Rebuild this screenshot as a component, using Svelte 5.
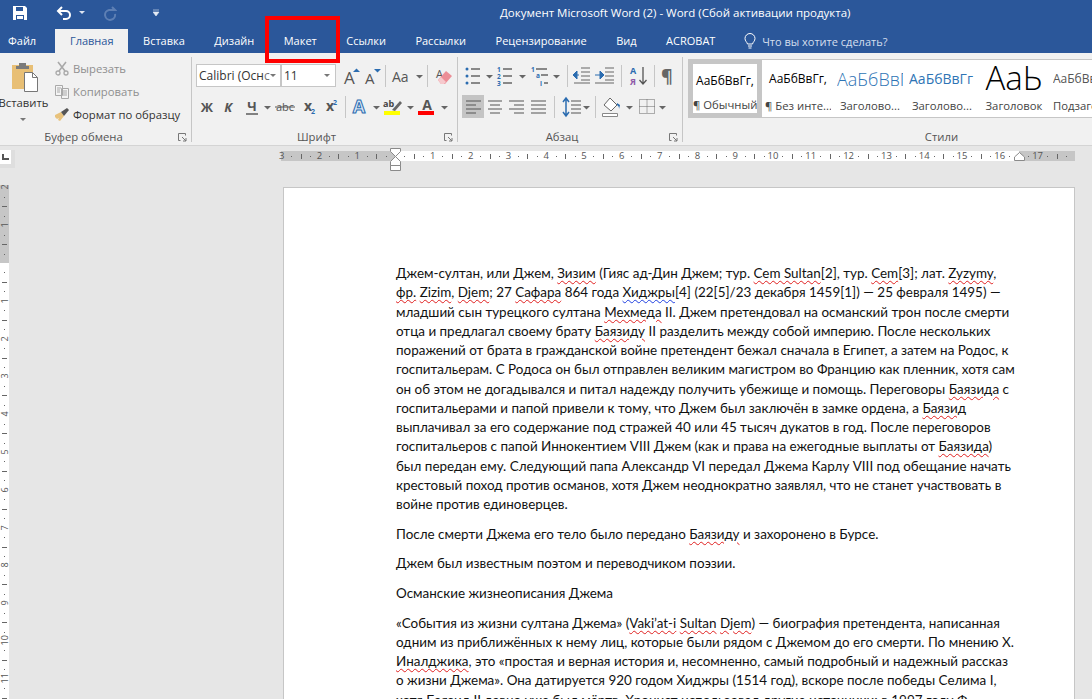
<script>
  const tabs = ["Вставка", "Дизайн", "Макет", "Ссылки", "Рассылки", "Рецензирование", "Вид", "ACROBAT"];

  const styleItems = [
    { sample: "АаБбВвГг,", name: "¶ Обычный", cls: "normal", on: true },
    { sample: "АаБбВвГг,", name: "¶ Без инте...", cls: "normal" },
    { sample: "АаБбВвГг", name: "Заголово...", cls: "h1" },
    { sample: "АаБбВвГг", name: "Заголово...", cls: "h2" },
    { sample: "АаЬ", name: "Заголовок", cls: "title" },
    { sample: "АаБбВвГг", name: "Подзаголовок", cls: "sub" }
  ];

  // ruler scale: 37.8px per cm
  const cm = 37.8;
  const hNumbers = [];
  const hTicks = [];
  for (let i = -3; i <= 17; i++) {
    if (i !== 0) hNumbers.push({ x: 114 + i * cm, n: Math.abs(i) });
  }
  for (let i = -3; i < 18; i++) {
    hTicks.push({ x: 114 + (i + 0.25) * cm, big: false });
    hTicks.push({ x: 114 + (i + 0.5) * cm, big: true });
    hTicks.push({ x: 114 + (i + 0.75) * cm, big: false });
  }
  const vNumbers = [];
  const vTicks = [];
  for (let i = -2; i <= 12; i++) {
    if (i !== 0) vNumbers.push({ y: 78 + i * cm, n: Math.abs(i) });
    vTicks.push({ y: 78 + (i + 0.25) * cm, big: false });
    vTicks.push({ y: 78 + (i + 0.5) * cm, big: true });
    vTicks.push({ y: 78 + (i + 0.75) * cm, big: false });
  }
</script>

{#snippet caret(w = 10)}
  <svg width={w} height="22"><path d="M{w / 2 - 3} 10h7l-3.500 3.500z" fill="#666" /></svg>
{/snippet}

{#snippet launcher()}
  <svg class="launcher" width="9" height="9"><path d="M.5 .5h7v2M.5 .5v7h2M4 4l4 4M8 5v3H5" fill="none" stroke="#777" /></svg>
{/snippet}

{#snippet sep(w = 6)}
  <span class="sep" style:width="{w}px"><i></i></span>
{/snippet}

<div class="word">
  <header class="titlebar">
    <div class="qat">
      <svg width="16" height="16" viewBox="0 0 16 16"><path d="M1 1h12l2 2v12H1z" fill="#fff" /><path d="M4 2h7v4H4zM4 10h8v5H4z" fill="#2b579a" /><path d="M5 11h6v3H5z" fill="#fff" /></svg>
      <svg class="undo" width="16" height="16" viewBox="0 0 16 16"><path d="M6 2L2 6l4 4M2.500 6H10a4 4 0 0 1 0 8H7" fill="none" stroke="#fff" stroke-width="2" /></svg>
      <svg class="mini" width="7" height="5"><path d="M0 1h6L3 4z" fill="#dfe6f1" /></svg>
      <svg class="redo" width="14" height="16" viewBox="0 0 14 16"><path d="M9 2l3 3H6a5 5 0 1 0 6 4" fill="none" stroke="#5d7fb4" stroke-width="2" /></svg>
      <svg class="custom" width="7" height="8"><path d="M0 1h6M0 3h6L3 7z" fill="#e6ecf5" stroke="#e6ecf5" stroke-width=".6" /></svg>
    </div>
    <div class="doc-title">Документ Microsoft Word (2) - Word (Сбой активации продукта)</div>
  </header>

  <nav class="tabs">
    <span class="tab file">Файл</span>
    <span class="tab active">Главная</span>
    {#each tabs as t}
      <span class="tab">{t}</span>
    {/each}
    <span class="tell">
      <svg width="12" height="16" viewBox="0 0 12 16"><path d="M3.500 11C3 9 1 8 1 5.500a5 5 0 0 1 10 0C11 8 9 9 8.500 11zM4 13h4M4.500 15h3" fill="none" stroke="#fff" /></svg>
      Что вы хотите сделать?
    </span>
  </nav>

  <section class="ribbon">
    <div class="group clip">
      <div class="clip-body">
        <button class="paste">
          <svg width="28" height="31" viewBox="0 0 28 31">
            <path d="M1 3h21v24H1z" fill="#e8bf75" />
            <path d="M8 1h7v3h3v3H5V4h3z" fill="#7b7b7b" />
            <path d="M13.500 10.500h8l5 5v14h-13z" fill="#fff" stroke="#777" />
            <path d="M21.500 10.500v5h5" fill="none" stroke="#777" />
          </svg>
          <span>Вставить</span>
          <svg width="7" height="5"><path d="M0 1h6L3 4z" fill="#777" /></svg>
        </button>
        <div class="clip-list">
          <span class="dim">
            <svg width="14" height="15" viewBox="0 0 14 15"><path d="M3 1l7 9M11 1l-7 9" stroke="#a9a9a9" stroke-width="1.600" /><circle cx="3" cy="12" r="2" fill="none" stroke="#a9a9a9" stroke-width="1.300" /><circle cx="11" cy="12" r="2" fill="none" stroke="#a9a9a9" stroke-width="1.300" /></svg>
            Вырезать
          </span>
          <span class="dim">
            <svg width="14" height="15" viewBox="0 0 14 15"><path d="M.5 1.500h7v10h-7zM6.500 4.500h7v10h-7zM2 4h4M2 6h3M2 8h3M8 7h4M8 9h4M8 11h4" fill="#f4f4f4" stroke="#a9a9a9" /></svg>
            Копировать
          </span>
          <span>
            <svg width="16" height="15" viewBox="0 0 16 15"><path d="M1 8l6-3 3 4-4 5-2-1 1-2-2 1-2-2z" fill="#e8c27c" /><path d="M7 5l6-4 2 2-5 6z" fill="#555" /></svg>
            Формат по образцу
          </span>
        </div>
      </div>
      <div class="label">Буфер обмена</div>
      {@render launcher()}
    </div>

    <div class="group font">
      <div class="row one">
        <span class="combo name"><b>Calibri (Осн<span class="clip-c">с</span></b><svg width="7" height="5"><path d="M0 1h6L3 4z" fill="#777" /></svg></span>
        <span class="combo size"><b>11</b><svg width="7" height="5"><path d="M0 1h6L3 4z" fill="#777" /></svg></span>
        <svg width="23" height="22"><text x="6" y="19" class="ic-a big">A</text><path d="M17 5h7l-3.500-3.500z" transform="translate(-2 2)" fill="#2b6cb0" /></svg>
        <svg width="21" height="22"><text x="4" y="19" class="ic-a">A</text><path d="M13 4h7l-3.500 3.500z" fill="#2b6cb0" /></svg>
        {@render sep(6)}
        <svg width="26" height="22"><text x="4" y="17" class="ic-a aa">Aa</text></svg>
        {@render caret(10)}
        {@render sep(6)}
        <svg width="26" height="22" viewBox="0 0 26 22"><text x="6" y="13" class="ic-a small">A</text><path d="M8 15l8-9 6 5-7 8h-4z" fill="#ec8e97" /><path d="M8 15l3-3 5 5-2 2h-3z" fill="#f6c9cd" /></svg>
      </div>
      <div class="row two">
        <svg width="20" height="22"><text x="9" y="16" class="bold">Ж</text></svg>
        <svg width="20" height="22"><text x="10" y="16" class="bold it">К</text></svg>
        <svg width="24" height="22"><text x="14" y="15" class="bold">Ч</text><path d="M8 18h12" stroke="#444" stroke-width="1.300" /></svg>
        {@render caret(10)}
        <svg width="26" height="22"><text x="13" y="15" class="strike">abc</text><path d="M3 11h20" stroke="#555" /></svg>
        <svg width="22" height="22"><text x="6" y="15" class="bold sc">x</text><text x="13" y="18" class="subs">2</text></svg>
        <svg width="22" height="22"><text x="6" y="15" class="bold sc">x</text><text x="13" y="9" class="subs">2</text></svg>
        {@render sep(6)}
        <svg width="22" height="22"><text x="11" y="17" class="fx">A</text></svg>
        {@render caret(12)}
        <svg width="22" height="22"><text x="1" y="11" class="hl">ab</text><path d="M10 14l8-9 2 2-7 8z" fill="#666" /><path d="M2 15h16v4H2z" fill="#ff0" /></svg>
        {@render caret(12)}
        <svg width="22" height="22"><text x="11" y="14" class="ra">A</text><path d="M1 15h16v4H1z" fill="#f00" transform="translate(1 0)" /></svg>
        {@render caret(12)}
      </div>
      <div class="label">Шрифт</div>
      {@render launcher()}
    </div>

    <div class="group para">
      <div class="row one">
        <svg width="20" height="22" viewBox="0 0 20 22"><g fill="#2b6cb0"><circle cx="5" cy="4" r="1.500" /><circle cx="5" cy="11" r="1.500" /><circle cx="5" cy="18" r="1.500" /></g><path d="M9 4h9M9 11h9M9 18h9" stroke="#666" stroke-width="1.300" /></svg>
        {@render caret(14)}
        <svg width="19" height="22" viewBox="0 0 19 22"><g class="nm"><text x="1" y="7">1</text><text x="1" y="14">2</text><text x="1" y="21">3</text></g><path d="M7 4h9M7 11h9M7 18h9" stroke="#666" stroke-width="1.300" /></svg>
        {@render caret(14)}
        <svg width="21" height="22" viewBox="0 0 21 22"><g class="nm"><text x="2" y="7">1</text><text x="7" y="13">a</text><text x="11" y="21">i</text></g><path d="M7 4h11M12 10h7M15 18h4" stroke="#666" stroke-width="1.300" /></svg>
        {@render caret(12)}
        {@render sep(10)}
        <svg width="21" height="22" viewBox="0 0 21 22"><path d="M1 10h6M5 6l-4 4 4 4z" fill="#2b6cb0" stroke="#2b6cb0" /><path d="M9 4h9M9 8h9M9 12h9M9 16h9M2 19h16" stroke="#666" stroke-width="1.100" transform="translate(0 -1)" /></svg>
        <svg width="23" height="22" viewBox="0 0 23 22"><path d="M2 10h6M7 6l4 4-4 4z" fill="#2b6cb0" stroke="#2b6cb0" /><path d="M12 4h9M12 8h9M12 12h9M12 16h9M2 19h19" stroke="#666" stroke-width="1.100" transform="translate(0 -1)" /></svg>
        {@render sep(10)}
        <svg width="22" height="22" viewBox="0 0 22 22"><text x="4" y="9" class="az">A</text><text x="4" y="20" class="az vi">Я</text><path d="M17 2v17M13.500 15l3.500 4 3.500-4" fill="none" stroke="#555" stroke-width="1.300" /></svg>
        {@render sep(12)}
        <svg width="22" height="22"><text x="7" y="18" class="pil">¶</text></svg>
      </div>
      <div class="row two">
        <svg class="selected" width="22" height="23" viewBox="0 0 22 23"><path d="M4 6h15M4 10h10M4 14h15M4 18h10" stroke="#555" stroke-width="1.100" /></svg>
        <svg width="22" height="23" viewBox="0 0 22 23"><path d="M4 6h14M6 10h10M4 14h14M6 18h10" stroke="#555" stroke-width="1.100" /></svg>
        <svg width="22" height="23" viewBox="0 0 22 23"><path d="M3 6h15M8 10h10M3 14h15M8 18h10" stroke="#555" stroke-width="1.100" /></svg>
        <svg width="22" height="23" viewBox="0 0 22 23"><path d="M3 6h15M3 10h15M3 14h15M3 18h15" stroke="#555" stroke-width="1.100" /></svg>
        {@render sep(8)}
        <svg width="24" height="22" viewBox="0 0 24 22"><path d="M8 3v16M5 6l3-4 3 4M5 16l3 4 3-4" fill="none" stroke="#2b6cb0" stroke-width="1.500" /><path d="M13 5h10M13 9h10M13 13h10M13 17h10" stroke="#555" stroke-width="1.100" /></svg>
        {@render caret(8)}
        {@render sep(10)}
        <svg width="24" height="22" viewBox="0 0 24 22"><path d="M10 2l7 7-6 6-7-6z" fill="#fff" stroke="#666" /><path d="M17 9c2 1 2 3 2 4l1-4-3-2z" fill="#2b6cb0" /><path d="M2.500 17.500h15v3h-15z" fill="#fff" stroke="#888" /></svg>
        {@render caret(10)}
        <svg width="24" height="22" viewBox="0 0 24 22"><path d="M5.500 3.500h15v14h-15zM13 3.500v14M5.500 10.500h15" fill="none" stroke="#666" stroke-dasharray="1 1" /></svg>
        {@render caret(8)}
      </div>
      <div class="label">Абзац</div>
      {@render launcher()}
    </div>

    <div class="group styles">
      <div class="gallery">
        {#each styleItems as s}
          <div class="style" class:on={s.on}>
            <div class="sample {s.cls}">{s.sample}</div>
            <div class="sname">{s.name}</div>
          </div>
        {/each}
      </div>
      <div class="label">Стили</div>
    </div>
  </section>

  <main class="workspace">
    <div class="corner"><svg width="8" height="7"><path d="M1 0v5h6" fill="none" stroke="#555" stroke-width="2" /></svg></div>

    <div class="vruler">
      <div class="vgray"></div>
      {#each vTicks as t}
        <i class="vtick" class:big={t.big} style:top="{t.y}px"></i>
      {/each}
      {#each vNumbers as t}
        <span class="vnum" style:top="{t.y}px">{t.n}</span>
      {/each}
    </div>

    <div class="main">
      <div class="hruler">
        <div class="hgray left"></div>
        <div class="hgray right"></div>
        {#each hTicks as t}
          <i class="htick" class:big={t.big} style:left="{t.x}px"></i>
        {/each}
        {#each hNumbers as t}
          <span class="hnum" style:left="{t.x}px">{t.n}</span>
        {/each}
        <svg class="marker first" width="11" height="24" viewBox="0 0 11 24"><path d="M.5 .5h10v3l-5 5-5-5zM.5 13.500l5-5 5 5v4H.5zM.5 17.500h10v5H.5z" fill="#fff" stroke="#8a8a8a" /></svg>
        <svg class="marker last" width="11" height="9" viewBox="0 0 11 9"><path d="M.5 5l5-4.500 5 4.500v3.500H.5z" fill="#fff" stroke="#8a8a8a" /></svg>
      </div>

      <article class="page">
        <p>
          <span>Джем-султан, или Джем, <u>Зизим</u> (Гияс ад-Дин Джем; тур. <u>Cem Sultan</u>[2], тур. <u>Cem</u>[3]; лат. <u>Zyzymy</u>,</span>
          <span><u>фр.</u> <u>Zizim</u>, <u>Djem</u>; 27 <u>Сафара</u> 864 года <u class="bl">Хиджры</u>[4] (22[5]/23 декабря 1459[1]) — 25 февраля 1495) —</span>
          <span>младший сын турецкого султана <u>Мехмеда</u> II. Джем претендовал на османский трон после смерти</span>
          <span>отца и предлагал своему брату <u>Баязиду</u> II разделить между собой империю. После нескольких</span>
          <span>поражений от брата в гражданской войне претендент бежал сначала в Египет, а затем на Родос, к</span>
          <span>госпитальерам. С Родоса он был отправлен великим магистром во Францию как пленник, хотя сам</span>
          <span>он об этом не догадывался и питал надежду получить убежище и помощь. Переговоры <u>Баязида</u> с</span>
          <span>госпитальерами и папой привели к тому, что Джем был заключён в замке ордена, а <u>Баязид</u></span>
          <span>выплачивал за его содержание под стражей 40 или 45 тысяч дукатов в год. После переговоров</span>
          <span>госпитальеров с папой Иннокентием VIII Джем (как и права на ежегодные выплаты от <u>Баязида</u>)</span>
          <span>был передан ему. Следующий папа Александр VI передал Джема Карлу VIII под обещание начать</span>
          <span>крестовый поход против османов, хотя Джем неоднократно заявлял, что не станет участвовать в</span>
          <span>войне против единоверцев.</span>
        </p>
        <p><span>После смерти Джема его тело было передано <u>Баязиду</u> и захоронено в Бурсе.</span></p>
        <p><span>Джем был известным поэтом и переводчиком поэзии.</span></p>
        <p><span>Османские жизнеописания Джема</span></p>
        <p>
          <span>«События из жизни султана Джема» (<u>Vaki’at-i</u> <u>Sultan</u> <u>Djem</u>) — биография претендента, написанная</span>
          <span>одним из приближённых к нему лиц, которые были рядом с Джемом до его смерти. По мнению Х.</span>
          <span><u>Иналджика</u>, это «простая и верная история и, несомненно, самый подробный и надежный рассказ</span>
          <span>о жизни Джема». Она датируется 920 годом Хиджры (1514 год), вскоре после победы Селима I,</span>
          <span>хотя Баязид II давно уже был мёртв. Хронист использовал другие источники; в 1997 году Ф.</span>
        </p>
      </article>
    </div>
  </main>

  <div class="highlight"></div>
</div>

<style>
  :global(body) {
    margin: 0;
    overflow: hidden;
  }

  .word {
    position: relative;
    width: 1092px;
    height: 699px;
    overflow: hidden;
    display: flex;
    flex-direction: column;
    font-family: "Open Sans", "Noto Sans", sans-serif;
    background: #e6e6e6;
  }

  svg {
    display: block;
    flex: none;
  }

  .titlebar {
    height: 25px;
    background: #2b579a;
    display: flex;
    align-items: center;
    color: #fff;
    flex: none;
  }
  .qat {
    width: 500px;
    display: flex;
    align-items: center;
    padding-left: 12px;
    box-sizing: border-box;
  }
  .undo { margin-left: 28px; }
  .mini { margin-left: 7px; }
  .redo { margin-left: 17px; }
  .custom { margin-left: 36px; }
  .doc-title {
    font-size: 11.5px;
    white-space: nowrap;
  }

  .tabs {
    height: 28px;
    background: #2b579a;
    display: flex;
    align-items: flex-end;
    color: #fff;
    font-size: 11px;
    flex: none;
  }
  .tab {
    height: 24px;
    line-height: 24px;
    padding: 0 14.750px;
    white-space: nowrap;
  }
  .tab.file { padding: 0 19px 0 8px; }
  .tab.active {
    background: #f1f1f1;
    color: #2b579a;
  }
  .tell {
    height: 24px;
    display: flex;
    align-items: center;
    gap: 6px;
    margin-left: 14px;
    color: #d5dfee;
    white-space: nowrap;
  }

  .ribbon {
    height: 92px;
    flex: none;
    display: flex;
    background: #f1f1f1;
    border-bottom: 1px solid #d4d4d4;
    font-size: 11.300px;
    color: #444;
  }
  .group {
    position: relative;
    height: 85px;
    margin-top: 4px;
    border-right: 1px solid #c6c6c6;
    box-sizing: border-box;
    flex: none;
  }
  .label {
    position: absolute;
    left: 0;
    right: 16px;
    bottom: -3px;
    text-align: center;
    color: #555;
    font-size: 11.300px;
    line-height: 16px;
  }
  .clip .label { right: 24px; }
  .styles .label { left: 108px; right: 0; }
  .launcher {
    position: absolute;
    right: 4px;
    bottom: 0;
  }
  .clip { width: 192px; }
  .clip-body { display: flex; }
  .paste {
    width: 47px;
    border: 0;
    background: none;
    padding: 5px 0 0;
    display: flex;
    flex-direction: column;
    align-items: center;
    font: inherit;
    color: #333;
  }
  .paste svg:first-child { margin: 0 0 0 3px; }
  .paste span { margin-top: 2px; line-height: 16px; }
  .paste svg:last-child { margin-top: 6px; }
  .clip-list {
    display: flex;
    flex-direction: column;
    padding: 0 0 0 7px;
  }
  .clip-list span {
    height: 23px;
    display: flex;
    align-items: center;
    gap: 3px;
    white-space: nowrap;
    color: #333;
  }
  .clip-list span svg { width: 16px; }
  .clip-list .dim { color: #8f8f8f; }

  .row {
    display: flex;
    align-items: center;
    height: 23px;
  }
  .font { width: 266px; padding-left: 4px; }
  .row.one { margin-top: 7px; }
  .row.two { margin-top: 8px; padding-left: 2px; }
  .combo {
    height: 23px;
    background: #fff;
    border: 1px solid #c6c6c6;
    box-sizing: border-box;
    display: flex;
    align-items: center;
    justify-content: space-between;
    padding: 0 4px 0 2px;
    overflow: hidden;
  }
  .combo b {
    font-weight: 400;
    font-size: 12px;
    white-space: nowrap;
    color: #333;
  }
  .combo.name { width: 85px; }
  .combo.size { width: 55px; margin-right: 2px; }
  .clip-c { opacity: .7; }

  .sep {
    display: flex;
    justify-content: center;
    align-self: center;
    flex: none;
  }
  .sep i {
    width: 1px;
    height: 22px;
    background: #c6c6c6;
  }

  text {
    font-family: "Open Sans", sans-serif;
    fill: #555;
  }
  .ic-a { font-size: 15px; }
  .ic-a.big { font-size: 17px; }
  .ic-a.aa { font-size: 14px; }
  .ic-a.small { font-size: 11px; }
  .bold { font-weight: 700; font-size: 13px; text-anchor: middle; fill: #555; }
  .bold.it { font-style: italic; }
  .bold.sc { font-size: 14px; text-anchor: start; }
  .subs { font-size: 7px; fill: #2b6cb0; font-weight: 700; }
  .strike { font-size: 11px; text-anchor: middle; }
  .fx { font-size: 18px; font-weight: 700; text-anchor: middle; fill: #dbe8f6; stroke: #2b6cb0; stroke-width: 1; }
  .hl { font-size: 9px; font-weight: 700; fill: #444; }
  .ra { font-size: 14px; font-weight: 700; text-anchor: middle; }
  .nm text { font-size: 6.500px; fill: #2b6cb0; font-weight: 700; }
  .az { font-size: 9px; font-weight: 700; fill: #2b6cb0; }
  .az.vi { fill: #8e5aa8; }
  .pil { font-size: 18px; font-weight: 700; text-anchor: middle; fill: #666; }

  .para { width: 225px; padding-left: 4px; }
  .para .row.two { padding-left: 0; }
  .selected { background: #c4c4c4; }

  .styles { flex: 1; border-right: 0; padding-left: 5px; overflow: hidden; }
  .gallery {
    display: flex;
    height: 59px;
    margin-top: 2px;
    background: #fff;
    border-top: 1px solid #c6c6c6;
    border-bottom: 1px solid #c6c6c6;
    box-sizing: border-box;
    width: 405px;
    overflow: hidden;
  }
  .style {
    width: 72px;
    flex: none;
    box-sizing: border-box;
    padding: 0 3px;
    text-align: center;
    overflow: hidden;
  }
  .style.on {
    width: 74px;
    border: 5px solid #c6c6c6;
    margin-top: -1px;
    height: 59px;
    padding: 0;
  }
  .sample {
    height: 38px;
    line-height: 38px;
    white-space: nowrap;
    color: #000;
    overflow: hidden;
    font-size: 12px;
  }
  .on .sample { height: 33px; line-height: 33px; }
  .sample.h1 { color: #2e74b5; font-size: 18px; font-weight: 300; text-align: left; }
  .sample.h2 { color: #2e74b5; font-size: 14px; text-align: left; }
  .sample.title { font-size: 33px; font-weight: 300; line-height: 36px; }
  .sample.sub { color: #555; font-size: 12px; text-align: left; }
  .sname {
    font-size: 11.300px;
    line-height: 16px;
    color: #444;
    white-space: nowrap;
    overflow: hidden;
  }

  .workspace {
    flex: 1;
    min-height: 0;
    position: relative;
    display: flex;
    background: #e6e6e6;
  }
  .corner {
    position: absolute;
    left: 0;
    top: 4px;
    width: 11px;
    height: 14px;
    background: #fff;
    border-right: 4px solid #dedede;
    border-bottom: 4px solid #dedede;
    display: flex;
    align-items: center;
    justify-content: center;
  }

  .vruler {
    position: relative;
    width: 9px;
    margin-top: 39px;
    background: #fff;
    flex: none;
    overflow: hidden;
  }
  .vgray {
    height: 78px;
    background: #c6c6c6;
  }
  .vtick {
    position: absolute;
    left: 4px;
    width: 1px;
    height: 1px;
    background: #666;
  }
  .vtick.big { left: 2px; width: 5px; }
  .vnum {
    position: absolute;
    left: 0;
    width: 9px;
    height: 12px;
    margin-top: -6px;
    line-height: 12px;
    text-align: center;
    font-size: 9px;
    color: #555;
    transform: rotate(-90deg);
  }

  .main {
    padding-left: 272px;
    flex: 1;
    min-width: 0;
  }
  .hruler {
    position: relative;
    width: 794px;
    height: 10px;
    margin-top: 5px;
    background: #fff;
  }
  .hgray {
    position: absolute;
    top: 0;
    bottom: 0;
    background: #c6c6c6;
  }
  .hgray.left { left: 0; width: 114px; }
  .hgray.right { left: 738px; right: 0; }
  .htick {
    position: absolute;
    top: 5px;
    width: 1px;
    height: 1px;
    background: #666;
  }
  .htick.big { top: 3px; height: 5px; }
  .hnum {
    position: absolute;
    top: 0;
    width: 14px;
    margin-left: -7px;
    line-height: 10px;
    text-align: center;
    font-size: 9.500px;
    color: #555;
  }
  .marker { position: absolute; }
  .marker.first { left: 109px; top: -3px; }
  .marker.last { left: 733px; top: 1px; }

  .page {
    width: 792px;
    margin: 26px 0 0 2px;
    padding: 76px 0 0 112px;
    background: #fff;
    border: 1px solid #c6c6c6;
    box-sizing: border-box;
    height: 600px;
    font-family: Lato, "Open Sans", sans-serif;
    font-size: 13.450px;
    color: #111;
  }
  .page p {
    margin: 0 0 10.400px;
  }
  .page span {
    display: block;
    height: 19.250px;
    line-height: 19.250px;
    white-space: nowrap;
  }
  u {
    text-decoration: underline wavy #e02020;
    text-decoration-thickness: 1px;
    text-underline-offset: 2px;
  }
  u.bl { text-decoration-color: #2040e0; }

  .highlight {
    position: absolute;
    left: 265px;
    top: 16px;
    width: 67px;
    height: 39px;
    border: 4px solid #f00;
    box-sizing: content-box;
    pointer-events: none;
  }
</style>
